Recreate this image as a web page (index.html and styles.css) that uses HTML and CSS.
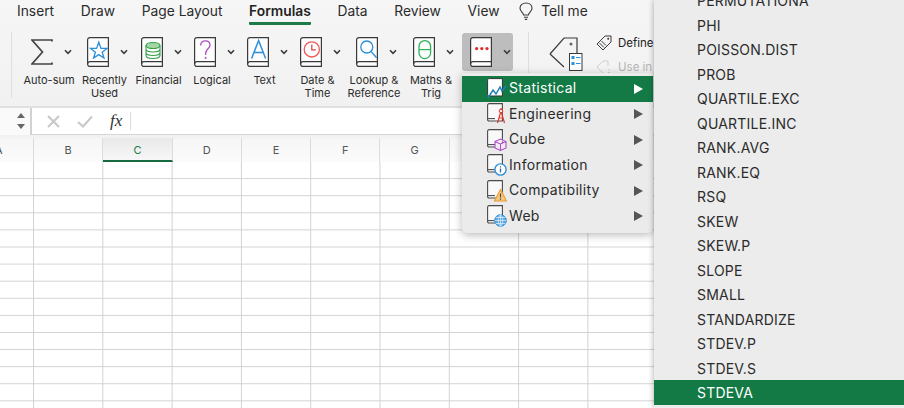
FILE: index.html
```html
<!DOCTYPE html>
<html lang="en">
<head>
<meta charset="utf-8">
<title>Formulas</title>
<link rel="stylesheet" href="styles.css">
</head>
<body>
<svg class="defs" width="0" height="0" aria-hidden="true">
  <symbol id="book" viewBox="0 0 22 30">
    <path d="M3 .6H21.4V29.4H3C1.6 29.4.6 28.4.6 27V3C.6 1.6 1.6.6 3 .6Z" fill="#fdfdfd" stroke="#3a3a3a" stroke-width="1.2"/>
    <path d="M.6 27C.6 25.6 1.6 24.6 3 24.6H21.4" fill="none" stroke="#3a3a3a" stroke-width="1.2"/>
  </symbol>
  <symbol id="chev" viewBox="0 0 8 6">
    <path d="M1 1.2 4 4.4 7 1.2" fill="none" stroke="#3c3c3c" stroke-width="1.6"/>
  </symbol>
  <symbol id="minibook" viewBox="0 0 20 22">
    <path d="M2.2.6H15.4V18H2.2C1.2 18 .6 17.4.6 16.4V2.2C.6 1.2 1.2.6 2.2.6Z" fill="#f9f9f9" stroke="#4a4a4a" stroke-width="1.1"/>
    <path d="M.8 15.6H8" fill="none" stroke="#4a4a4a" stroke-width="1.1"/>
  </symbol>
</svg>

<header class="ribbon">
  <nav class="tabs">
    <span class="tab">Insert</span>
    <span class="tab">Draw</span>
    <span class="tab">Page Layout</span>
    <span class="tab tab-active">Formulas</span>
    <span class="tab">Data</span>
    <span class="tab">Review</span>
    <span class="tab">View</span>
    <span class="tell">
      <svg width="14" height="19" viewBox="0 0 14 19"><path d="M4.6 13C4.4 10.8 1 9.6 1 6.2 1 3 3.6 1 7 1s6 2 6 5.2c0 3.4-3.4 4.6-3.6 6.8ZM5 15.2H9M5.8 17.4H8.2" fill="none" stroke="#3a3a3a" stroke-width="1.1"/></svg>
      Tell me
    </span>
  </nav>

  <div class="tools">
    <div class="tool-group">
      <div class="tool">
        <div class="tool-icons">
          <svg class="icon" viewBox="0 0 22 30"><path d="M21 4.5V3H1L11.5 15 1 27H21V25.6" fill="none" stroke="#444" stroke-width="1.7"/></svg>
          <svg class="chev"><use href="#chev"/></svg>
        </div>
        <div class="tool-label">Auto-sum</div>
      </div>
      <div class="tool">
        <div class="tool-icons">
          <svg class="icon" viewBox="0 0 22 30"><use href="#book"/><path d="M11.8 5.2 14 11.4H20L15.2 15.2 17 21 11.8 17.6 6.6 21 8.4 15.2 3.6 11.4H9.6Z" fill="none" stroke="#2b8fd9" stroke-width="1.3"/></svg>
          <svg class="chev"><use href="#chev"/></svg>
        </div>
        <div class="tool-label">Recently<br>Used</div>
      </div>
      <div class="tool">
        <div class="tool-icons">
          <svg class="icon" viewBox="0 0 22 30"><use href="#book"/><ellipse cx="12" cy="8.5" rx="7" ry="3" fill="#a5d6a7" stroke="#35a04a" stroke-width="1.1"/><path d="M5 8.5V18.5C5 20.2 8 21.5 12 21.5S19 20.2 19 18.5V8.5M5 12C5 13.7 8 15 12 15S19 13.7 19 12M5 15.5C5 17.2 8 18.5 12 18.5S19 17.2 19 15.5" fill="none" stroke="#35a04a" stroke-width="1.1"/></svg>
          <svg class="chev"><use href="#chev"/></svg>
        </div>
        <div class="tool-label">Financial</div>
      </div>
      <div class="tool">
        <div class="tool-icons">
          <svg class="icon" viewBox="0 0 22 30"><use href="#book"/><path d="M6.6 8.4C6.6 5.6 8.8 3.8 11.4 3.8 14.2 3.8 16 5.6 16 8 16 11.6 11.6 12 11.6 16.6V18" fill="none" stroke="#b04fc6" stroke-width="1.3"/><circle cx="11.6" cy="21" r="1" fill="#b04fc6"/></svg>
          <svg class="chev"><use href="#chev"/></svg>
        </div>
        <div class="tool-label">Logical</div>
      </div>
      <div class="tool">
        <div class="tool-icons">
          <svg class="icon" viewBox="0 0 22 30"><use href="#book"/><path d="M4.6 21.5 11.6 3.5 18.6 21.5M7 15.4H16.2" fill="none" stroke="#2b8fd9" stroke-width="1.5"/></svg>
          <svg class="chev"><use href="#chev"/></svg>
        </div>
        <div class="tool-label">Text</div>
      </div>
      <div class="tool">
        <div class="tool-icons">
          <svg class="icon" viewBox="0 0 22 30"><use href="#book"/><circle cx="11.8" cy="12.4" r="7.6" fill="none" stroke="#ea5a5a" stroke-width="1.3"/><path d="M11.8 7.4V12.8H15.8" fill="none" stroke="#e23c3c" stroke-width="1.2"/></svg>
          <svg class="chev"><use href="#chev"/></svg>
        </div>
        <div class="tool-label">Date &amp;<br>Time</div>
      </div>
      <div class="tool">
        <div class="tool-icons">
          <svg class="icon" viewBox="0 0 22 30"><use href="#book"/><circle cx="10.8" cy="10" r="6" fill="none" stroke="#2b8fd9" stroke-width="1.3"/><path d="M15 14.4 20.6 20.8" fill="none" stroke="#2b8fd9" stroke-width="1.4"/></svg>
          <svg class="chev"><use href="#chev"/></svg>
        </div>
        <div class="tool-label">Lookup &amp;<br>Reference</div>
      </div>
      <div class="tool">
        <div class="tool-icons">
          <svg class="icon" viewBox="0 0 22 30"><use href="#book"/><rect x="6" y="3.6" width="11.6" height="18" rx="5.8" fill="none" stroke="#2fb457" stroke-width="1.3"/><path d="M6 12.6H17.6" fill="none" stroke="#2fb457" stroke-width="1.2"/></svg>
          <svg class="chev"><use href="#chev"/></svg>
        </div>
        <div class="tool-label">Maths &amp;<br>Trig</div>
      </div>
    </div>

    <div class="more-btn">
      <svg class="icon" viewBox="0 0 22 30"><use href="#book"/><g fill="#e02b2b"><circle cx="6.6" cy="11.6" r="1.6"/><circle cx="11.8" cy="11.6" r="1.6"/><circle cx="17" cy="11.6" r="1.6"/></g></svg>
      <svg class="chev"><use href="#chev"/></svg>
    </div>

    <div class="names">
      <svg class="tag-big" width="34" height="34" viewBox="0 0 34 34">
        <path d="M1 17 15 1H28V16M1 17 15 30" fill="none" stroke="#3a3a3a" stroke-width="1.2"/>
        <circle cx="22" cy="7" r="1.5" fill="#666"/>
        <rect x="20.5" y="16.5" width="12.5" height="17" fill="#fdfdfd" stroke="#3a3a3a"/>
        <g fill="#2b8fd9"><rect x="22.5" y="19" width="3" height="3"/><rect x="22.5" y="25" width="3" height="3"/><rect x="27" y="20" width="4.5" height="1"/><rect x="27" y="26" width="4.5" height="1"/></g>
      </svg>
      <div class="names-list">
        <div class="name-row">
          <svg width="16" height="16" viewBox="0 0 16 16"><path d="M1 9 9 1H15V7L7 15ZM3.5 8 8 12.5M5.5 6 10 10.5" fill="none" stroke="#3a3a3a" stroke-width="1"/><circle cx="12.2" cy="3.8" r="1" fill="#3a3a3a"/></svg>
          <span>Define</span>
        </div>
        <div class="name-row name-off">
          <svg width="16" height="14" viewBox="0 0 16 14"><path d="M1 7 7 1H12V6M1 7 7 13" fill="none" stroke="#cfcfcf" stroke-width="1"/><path d="M12 10H14M12 12.5H14" stroke="#cfcfcf"/></svg>
          <span>Use in</span>
        </div>
      </div>
    </div>
  </div>
</header>

<section class="formula-bar">
  <div class="name-box">
    <span class="step step-up"></span>
    <span class="step step-down"></span>
  </div>
  <svg class="fbtn" width="13" height="13" viewBox="0 0 13 13"><path d="M1 1 12 12M12 1 1 12" stroke="#c9c9c9" stroke-width="2.2"/></svg>
  <svg class="fbtn fbtn-ok" width="16" height="13" viewBox="0 0 16 13"><path d="M1 7 6 11.5 15 1.5" fill="none" stroke="#c9c9c9" stroke-width="2.2"/></svg>
  <span class="fx">fx</span>
</section>

<main class="sheet">
  <div class="col-heads">
    <div class="col-head">A</div>
    <div class="col-head">B</div>
    <div class="col-head col-active">C</div>
    <div class="col-head">D</div>
    <div class="col-head">E</div>
    <div class="col-head">F</div>
    <div class="col-head">G</div>
    <div class="col-head">H</div>
    <div class="col-head">I</div>
    <div class="col-head">J</div>
  </div>
  <div class="cells"></div>
</main>

<div class="submenu">
  <div class="menu-row menu-active">
    <svg class="menu-icon" viewBox="0 0 20 22"><path d="M2.2.6H15.4V18H2.2C1.2 18 .6 17.4.6 16.4V2.2C.6 1.2 1.2.6 2.2.6Z" fill="#fff" stroke="#333" stroke-width="1"/><path d="M1 20 6 12 9 16 13 9 15 13 19 8" fill="none" stroke="#1f7fb8" stroke-width="1.5"/></svg>
    <span class="menu-text">Statistical</span><span class="menu-arrow"></span>
  </div>
  <div class="menu-row">
    <svg class="menu-icon" viewBox="0 0 20 22"><use href="#minibook"/><path d="M14 5V8M14 8 10.5 20M14 8 17.5 20M11.5 15H16.5" fill="none" stroke="#e0392f" stroke-width="1.2"/><circle cx="14" cy="8" r="1.8" fill="#fbe3e1" stroke="#e0392f"/></svg>
    <span class="menu-text">Engineering</span><span class="menu-arrow"></span>
  </div>
  <div class="menu-row">
    <svg class="menu-icon" viewBox="0 0 20 22"><use href="#minibook"/><path d="M8 12.5 13.5 10 19 12.5V19L13.5 21.5 8 19ZM8 12.5 13.5 15 19 12.5M13.5 15V21.5" fill="#f6e9fa" stroke="#b04fc6" stroke-width="1.1"/></svg>
    <span class="menu-text">Cube</span><span class="menu-arrow"></span>
  </div>
  <div class="menu-row">
    <svg class="menu-icon" viewBox="0 0 20 22"><use href="#minibook"/><circle cx="13.5" cy="15.5" r="5.6" fill="#fff" stroke="#2b8fd9" stroke-width="1.4"/><path d="M13.5 14.5V18.5M13.5 12.2V13.4" stroke="#1f6fa8" stroke-width="1.3"/></svg>
    <span class="menu-text">Information</span><span class="menu-arrow"></span>
  </div>
  <div class="menu-row">
    <svg class="menu-icon" viewBox="0 0 20 22"><use href="#minibook"/><path d="M13.5 9.5 19.5 21H7.5Z" fill="#f6c77e" stroke="#ec9a35" stroke-width="1.1"/><path d="M13.5 13.5V17.5M13.5 18.5V19.8" stroke="#444" stroke-width="1.1"/></svg>
    <span class="menu-text">Compatibility</span><span class="menu-arrow"></span>
  </div>
  <div class="menu-row">
    <svg class="menu-icon" viewBox="0 0 20 22"><use href="#minibook"/><circle cx="13.5" cy="15.5" r="5.8" fill="#5aa6e0" stroke="#2b8fd9"/><path d="M7.7 15.5H19.3M8.6 12.5H18.4M8.6 18.5H18.4M13.5 9.7V21.3M13.5 9.7C10.5 12 10.5 19 13.5 21.3M13.5 9.7C16.5 12 16.5 19 13.5 21.3" fill="none" stroke="#e4f1fb" stroke-width=".7"/></svg>
    <span class="menu-text">Web</span><span class="menu-arrow"></span>
  </div>
</div>

<aside class="fn-panel">
  <ul class="fn-list">
    <li class="fn">PERMUTATIONA</li>
    <li class="fn">PHI</li>
    <li class="fn">POISSON.DIST</li>
    <li class="fn">PROB</li>
    <li class="fn">QUARTILE.EXC</li>
    <li class="fn">QUARTILE.INC</li>
    <li class="fn">RANK.AVG</li>
    <li class="fn">RANK.EQ</li>
    <li class="fn">RSQ</li>
    <li class="fn">SKEW</li>
    <li class="fn">SKEW.P</li>
    <li class="fn">SLOPE</li>
    <li class="fn">SMALL</li>
    <li class="fn">STANDARDIZE</li>
    <li class="fn">STDEV.P</li>
    <li class="fn">STDEV.S</li>
    <li class="fn fn-active">STDEVA</li>
  </ul>
</aside>
</body>
</html>
```

FILE: styles.css
```css
* { box-sizing: border-box; }

html, body {
  margin: 0;
  height: 408px;
  overflow: hidden;
  background: #fff;
  font-family: Inter, "Liberation Sans", sans-serif;
  color: #2b2b2b;
}

.defs { position: absolute; }

/* Ribbon */
.ribbon {
  height: 108px;
  background: linear-gradient(#f6f6f6, #f1f1f1);
  border-bottom: 2px solid #e0e0e0;
}

.tabs {
  display: flex;
  height: 25px;
  padding-left: 17px;
  gap: 26.7px;
  font-size: 13.8px;
  line-height: 23px;
}

.tab { height: 25px; }

.tab-active {
  font-weight: 600;
  color: #222;
  border-bottom: 3px solid #1f7a4a;
  border-radius: 0 0 1px 1px;
}

.tell {
  display: flex;
  align-items: center;
  gap: 8px;
  height: 23px;
  margin-left: -7px;
}

.tools {
  display: flex;
  margin: 7px 0 0 11px;
}

.tool-group {
  display: grid;
  grid-template-columns: 56px 55px 53px 54px 51px 55px 58px 56px;
  height: 66px;
  padding-left: 9px;
  border-left: 1px solid #dedede;
}

.tool {
  display: flex;
  flex-direction: column;
  align-items: center;
}

.tool-icons {
  display: flex;
  align-items: center;
  height: 39px;
  padding: 1px 0 0 5px;
  gap: 11px;
}

.icon {
  width: 22px;
  height: 30px;
  flex: none;
}

.chev {
  width: 8px;
  height: 6px;
  flex: none;
}

.tool-label {
  margin-top: 3px;
  font-size: 11px;
  line-height: 13px;
  text-align: center;
  white-space: nowrap;
}

.more-btn {
  display: flex;
  align-items: center;
  width: 51px;
  height: 38px;
  margin: 1px 0 0 3px;
  padding-left: 8px;
  gap: 11px;
  background: #bdbdbd;
  border-radius: 3px;
}

.names {
  display: flex;
  height: 66px;
  margin-left: 15px;
  padding: 5px 0 0 20px;
  border-left: 1px solid #dedede;
}

.tag-big { flex: none; }

.names-list {
  margin: -2px 0 0 13px;
  font-size: 11.5px;
}

.name-row {
  display: flex;
  align-items: center;
  height: 16px;
  gap: 6px;
  white-space: nowrap;
  color: #222;
}

.name-row + .name-row { margin-top: 8px; }
.name-off { color: #b5b5b5; }

/* Formula bar */
.formula-bar {
  display: flex;
  align-items: center;
  height: 27px;
  background: #fff;
  border-bottom: 1px solid #d6d6d6;
}

.name-box {
  display: flex;
  flex-direction: column;
  align-items: flex-end;
  justify-content: center;
  flex: none;
  width: 32px;
  height: 27px;
  padding-right: 5px;
  gap: 6px;
  background: #fafafa;
  border-right: 2px solid #d2d2d2;
}

.step {
  width: 0;
  height: 0;
  border-left: 4px solid transparent;
  border-right: 4px solid transparent;
}

.step-up { border-bottom: 5px solid #666; }
.step-down { border-top: 5px solid #666; }

.fbtn { margin-left: 15px; flex: none; }
.fbtn-ok { margin-left: 17px; }

.fx {
  height: 18px;
  margin-left: 17px;
  padding-right: 8px;
  font-family: "Liberation Serif", serif;
  font-style: italic;
  font-size: 17px;
  line-height: 18px;
  color: #333;
  border-right: 1px solid #dcdcdc;
}

/* Sheet */
.sheet {
  height: 273px;
  padding-top: 3px;
  background: #f2f2f2;
  overflow: hidden;
}

.col-heads {
  display: flex;
  height: 24px;
  margin-left: -35.3px;
}

.col-head {
  flex: none;
  width: 69.3px;
  font-size: 11px;
  line-height: 24px;
  text-align: center;
  color: #555;
  background: linear-gradient(#f6f6f6, #fbfbfb);
  border-right: 1px solid #dcdcdc;
}

.col-active {
  color: #1a7a4a;
  background: linear-gradient(#e9e9e9, #f7f7f7);
  border-bottom: 2px solid #17693f;
}

.cells {
  height: 100%;
  background-color: #fff;
  background-image:
    linear-gradient(to left, #d2d2d2 1px, transparent 1px),
    linear-gradient(to top, #d2d2d2 1px, transparent 1px);
  background-size: 69.3px 17.1px;
  background-position: -35.3px 0;
}

/* Submenu overlay */
.submenu {
  position: absolute;
  left: 462px;
  top: 73px;
  width: 191px;
  height: 160px;
  padding-top: 3px;
  background: #ebebeb;
  border-radius: 0 0 5px 5px;
  box-shadow: 0 2px 8px rgba(0, 0, 0, .28);
}

.menu-row {
  display: flex;
  align-items: center;
  height: 25.5px;
  padding-left: 25px;
  color: #2b2b2b;
}

.menu-active {
  color: #fff;
  background: #137a45;
}

.menu-icon {
  flex: none;
  width: 20px;
  height: 22px;
}

.menu-text {
  flex: 1;
  margin: -2px 0 0 2px;
  font-size: 14px;
  letter-spacing: .3px;
}

.menu-arrow {
  width: 0;
  height: 0;
  margin-right: 10px;
  border-left: 9px solid #555;
  border-top: 5px solid transparent;
  border-bottom: 5px solid transparent;
}

.menu-active .menu-arrow { border-left-color: #fff; }

/* Function list overlay */
.fn-panel {
  position: absolute;
  left: 654px;
  top: 0;
  right: 0;
  height: 408px;
  overflow: hidden;
  background: #ececec;
  box-shadow: 0 0 6px rgba(0, 0, 0, .35);
}

.fn-list {
  margin: -12px 0 0;
  padding: 0;
  list-style: none;
}

.fn {
  height: 24.53px;
  padding: 1px 0 0 43px;
  font-size: 14px;
  line-height: 24.53px;
  letter-spacing: .2px;
  color: #2b2b2b;
}

.fn-active {
  color: #fff;
  background: #137a45;
}
```
